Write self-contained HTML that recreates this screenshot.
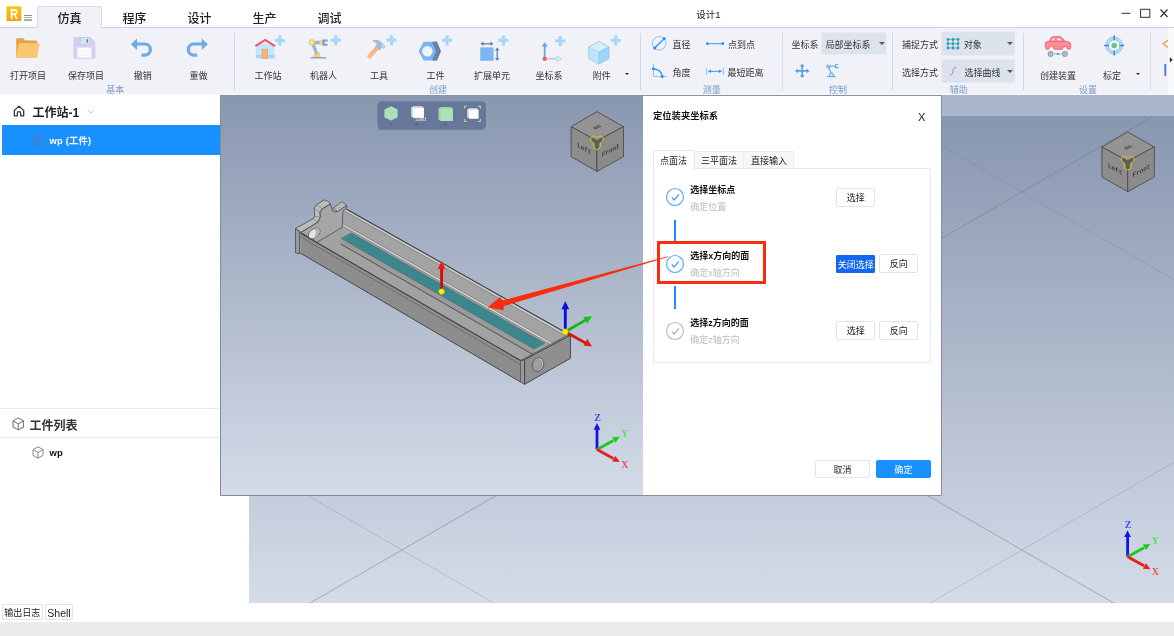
<!DOCTYPE html>
<html lang="zh-CN">
<head>
<meta charset="utf-8">
<title>设计1</title>
<style>
*{box-sizing:border-box;margin:0;padding:0}
html,body{width:1174px;height:636px;overflow:hidden;background:#fff}
body{position:relative;font-family:"Liberation Sans","Noto Sans CJK SC",sans-serif;color:#333;font-size:9px}
.abs{position:absolute}
.t{position:absolute;white-space:nowrap;line-height:1;transform:translate(-50%,-50%)}
.tl{position:absolute;white-space:nowrap;line-height:1;transform:translate(0,-50%)}
#titlebar{left:0;top:0;width:1174px;height:27px;background:#fff;z-index:3}
#ribbon{left:0;top:27px;width:1174px;height:68px;background:#f0f2f7;border-top:1px solid #c9d5e9}
.tab{position:absolute;top:6px;height:22px;width:65px;font-size:12px;font-weight:500;color:#222;text-align:center;line-height:26px}
.tab.on{background:#f0f2f7;border:1px solid #d3dced;border-bottom:none;border-radius:3px 3px 0 0;line-height:24px}
.lbl{font-size:9px;color:#333}
.grp{font-size:9px;color:#7b9bc8}
.sep{position:absolute;top:33px;height:57px;width:1px;background:#d0daeb}
.combo{position:absolute;background:#dde3ed}
.caret{position:absolute;width:0;height:0;border-left:3px solid transparent;border-right:3px solid transparent;border-top:3.5px solid #555}
#left{left:0;top:95px;width:220px;height:508px;background:#fff}
.btn{position:absolute;border:1px solid #e3e3e3;border-radius:2px;background:#fff;font-size:9px;color:#222;text-align:center}
</style>
</head>
<body>
<div id="app" class="abs" style="left:0;top:0;width:1174px;height:636px;will-change:transform;background:#fff">
<!-- TITLE BAR -->
<div id="titlebar" class="abs">
  <svg class="abs" style="left:6px;top:6px" width="16" height="16" viewBox="0 0 16 16">
    <defs><linearGradient id="lg" x1="0" y1="0" x2="0" y2="1"><stop offset="0" stop-color="#fbc715"/><stop offset="1" stop-color="#eea410"/></linearGradient></defs>
    <rect x="0.5" y="0.3" width="14.8" height="14.8" fill="url(#lg)"/>
    <text transform="translate(7.900 13.300) scale(0.740 1)" font-family="Liberation Sans,sans-serif" font-weight="bold" font-size="15" fill="#fff" text-anchor="middle">R</text>
  </svg>
  <div class="abs" style="left:24px;top:14.700px;width:8.200px;height:1.500px;background:#8c8c8c"></div>
  <div class="abs" style="left:24px;top:16.900px;width:8.200px;height:1.500px;background:#b0b0b0"></div>
  <div class="abs" style="left:24px;top:19.200px;width:8.200px;height:1.500px;background:#adadad"></div>
  <div class="tab on" style="left:37px">仿真</div>
  <div class="tab" style="left:102px">程序</div>
  <div class="tab" style="left:167px">设计</div>
  <div class="tab" style="left:232px">生产</div>
  <div class="tab" style="left:297px">调试</div>
  <div class="t" style="left:708.5px;top:14.5px;font-size:9.5px;color:#222">设计1</div>
  <svg class="abs" style="left:1118px;top:6px" width="54" height="16" viewBox="0 0 54 16" fill="none" stroke="#333" stroke-width="1">
    <path d="M3.4 7.3h9"/>
    <rect x="22.6" y="3.3" width="9.2" height="8"/>
    <path d="M42.500 3.500l7 7.500M49.500 3.500l-7 7.500" stroke-width="1.200"/>
  </svg>
</div>
<!-- RIBBON -->
<div id="ribbon" class="abs"></div>
<div class="abs" style="left:0;top:93px;width:1174px;height:2px;background:#f6f7fa"></div>
<div id="rib" class="abs" style="left:0;top:0;width:1174px;height:95px">

<!-- group 基本 -->
<svg class="abs" style="left:0;top:28px" width="1174" height="67" viewBox="0 28 1174 67">
<rect x="821.5" y="32.5" width="64.7" height="22" fill="#dde3ed"/>
<rect x="941.3" y="31.8" width="73.6" height="23.7" fill="#dde3ed"/>
<rect x="941.3" y="59.3" width="73.6" height="23.4" fill="#dde3ed"/>
<!-- folder -->
<path d="M16.3 39.2q0-1 1-1h6.2l1.6 2.2h11q1 0 1 1v3h-20.8z" fill="#e0a146"/>
<path d="M16.3 57.6V39.5h5.8l1.8 2.3h12.5q0.8 0 0.8 0.8V57.6z" fill="#e3a54b"/>
<path d="M18.6 44.2q0.2-0.9 1.1-0.9h19q1.1 0 0.9 1l-2.3 12.3q-0.2 1-1.2 1H17.3q-1.1 0-0.9-1z" fill="#fdc673"/>
<!-- save -->
<path d="M74.6 37.6h15.6l4.6 4.6v15.4q0 0.6-0.6 0.6H74.6q-0.6 0-0.6-0.6V38.2q0-0.6 0.6-0.6z" fill="#dacdf1" stroke="#cdbdea" stroke-width="0.600"/>
<rect x="80.4" y="37.8" width="9.4" height="6.4" fill="#d9e6f2" stroke="#b9c9dc" stroke-width="0.5"/>
<rect x="86.6" y="39.2" width="1.5" height="3.4" fill="#5c7fb4"/>
<rect x="77.4" y="47.6" width="14" height="10" fill="#fff"/>
<path d="M78.6 50.4h11.6M78.6 52.8h11.6M78.6 55.2h11.6" stroke="#dcebfa" stroke-width="0.8"/>
<!-- undo -->
<path d="M130.8 44.3l6.2-5.8v3.9h7.8a7.2 7.2 0 0 1 0 14.4h-3.3v-3.2h3.3a4 4 0 0 0 0-8h-7.8v4.4z" fill="#6daaea"/>
<!-- redo -->
<path d="M207.9 44.3l-6.2-5.8v3.9h-7.8a7.2 7.2 0 0 0 0 14.4h3.3v-3.2h-3.3a4 4 0 0 1 0-8h7.8v4.4z" fill="#6daaea"/>
<!-- house -->
<rect x="255.8" y="44" width="18.8" height="14.4" fill="#c4e6fb"/>
<rect x="255.8" y="54.8" width="18.8" height="3.6" fill="#aad8f6"/>
<path d="M255.400 46.200L265.200 40l9.800 6.200" fill="none" stroke="#ee5562" stroke-width="2" stroke-linejoin="miter"/>
<rect x="262" y="49.2" width="5.6" height="9.2" fill="#fbb27a" stroke="#e8905a" stroke-width="0.6"/>
<path d="M278.29999999999995 35.5h3.2v3.4h3.4v3.2h-3.4v3.4h-3.2v-3.4h-3.4v-3.2h3.4z" fill="#a6d8f6"/>
<!-- robot -->
<path d="M310.5 57h15.8v1.6h-15.8z" fill="#8fabce"/>
<path d="M313.6 56.8l1.6-4.6h3.6l1.6 4.6z" fill="#f5d96b" stroke="#d9b840" stroke-width="0.4"/>
<path d="M311 43.6l3.2-1 3.6 9.8-3 1z" fill="#9ab4d6"/>
<path d="M312 40.8h10.6v3.6H312z" fill="#9ab4d6"/>
<circle cx="311.8" cy="42.4" r="3" fill="#f5d96b" stroke="#d9b840" stroke-width="0.5"/><circle cx="311.8" cy="42.4" r="1.1" fill="#f0f2f7"/>
<rect x="319.6" y="40.2" width="2.6" height="4.8" fill="#f5d96b"/>
<path d="M322.4 39.4h5.2v2h-3v2.4h3v2h-5.2z" fill="#7e9cc4"/>
<circle cx="316.6" cy="54.2" r="0.9" fill="#8fabce"/>
<path d="M334.2 35.2h3.2v3.4h3.4v3.2h-3.4v3.4h-3.2v-3.4h-3.4v-3.2h3.4z" fill="#a6d8f6"/>
<!-- hammer -->
<path d="M366.8 56.2l9.6-10.8 3.2 2.9-9.6 10.8z" fill="#fbb583"/>
<path d="M372.6 40.4q4.2-1.6 7.4 0.6l5.6 5.2-2 2.2-1.6-0.6-2.4 2.8-4.6-4 2-2.6q-1.6-1.6-4.4-2.4z" fill="#a9bdd2"/>
<path d="M380.6 46.6l2.2-2.4 2.8 2.4-2 2.4z" fill="#c3d3e2"/>
<path d="M389.9 35.2h3.2v3.4h3.4v3.2h-3.4v3.4h-3.2v-3.4h-3.4v-3.2h3.4z" fill="#a6d8f6"/>
<!-- nut -->
<path d="M428 43.2l6-1.8h3l4 9.8-4 9.6h-3l-6-1.6z" fill="#6683a6"/>
<path d="M423.6 41.8h8l4.6 9.4-4.6 9.4h-8l-5-9.4z" fill="#7ab6f6"/>
<circle cx="427.4" cy="51.2" r="5.2" fill="#f0f2f7"/>
<path d="M445.4 35.4h3.2v3.4h3.4v3.2h-3.4v3.4h-3.2v-3.4h-3.4v-3.2h3.4z" fill="#a6d8f6"/>
<!-- expand unit -->
<rect x="480.2" y="47.4" width="13.4" height="13.4" fill="#7ab6f6"/>
<path d="M482.4 43.8h9.2" stroke="#5e7c9e" stroke-width="1.2"/><path d="M480.6 43.8l2.8-2.2v4.4zM493.4 43.8l-2.8-2.2v4.4z" fill="#5e7c9e"/>
<path d="M497.2 49.6v9" stroke="#5e7c9e" stroke-width="1.2"/><path d="M497.2 47.6l-2.2 2.8h4.4zM497.2 60.8l-2.2-2.8h4.4z" fill="#5e7c9e"/>
<path d="M501.9 35.4h3.2v3.4h3.4v3.2h-3.4v3.4h-3.2v-3.4h-3.4v-3.2h3.4z" fill="#a6d8f6"/>
<!-- coord -->
<path d="M546 58.7h11.5" stroke="#b9d2e2" stroke-width="1.8"/><path d="M561.2 58.7l-4.2-3v6z" fill="#f0f2f7" stroke="#b9d2e2" stroke-width="1"/>
<path d="M544.7 57V45.5" stroke="#6aa5ea" stroke-width="1.8"/><path d="M544.7 42.2l-3.2 4.2h6.4z" fill="#6aa5ea"/>
<circle cx="544.7" cy="58.7" r="2.2" fill="#f0606e"/>
<path d="M558.6 35.9h3.2v3.4h3.4v3.2h-3.4v3.4h-3.2v-3.4h-3.4v-3.2h3.4z" fill="#a6d8f6"/>
<!-- cube -->
<path d="M598.8 41.6l10 5.4v11.6l-10 5.4-10-5.4V47z" fill="#bfe6fb" stroke="#86bdf0" stroke-width="0.7" stroke-linejoin="round"/>
<path d="M598.8 41.6l10 5.4-10 5.2-10-5.2z" fill="#d6effc" stroke="#86bdf0" stroke-width="0.5" stroke-linejoin="round"/>
<path d="M598.8 52.2l10-5.2v11.6l-10 5.4z" fill="#9bd8f8" stroke="#86bdf0" stroke-width="0.5" stroke-linejoin="round"/>
<path d="M614.1999999999999 35.5h3.2v3.4h3.4v3.2h-3.4v3.4h-3.2v-3.4h-3.4v-3.2h3.4z" fill="#a6d8f6"/>
<!-- diameter -->
<circle cx="659.2" cy="43.3" r="6.8" fill="none" stroke="#7ab4ee" stroke-width="0.8"/>
<path d="M654.7 48l9.5-9.4" stroke="#1e8fff" stroke-width="1.3"/><circle cx="654.7" cy="48" r="1.5" fill="#1e8fff"/><circle cx="664.2" cy="38.6" r="1.5" fill="#1e8fff"/>
<!-- angle -->
<path d="M653.4 64v12.4h14" fill="none" stroke="#7ab4ee" stroke-width="0.8"/>
<path d="M653.4 68.8q8 0.4 8.8 7.6" fill="none" stroke="#1e8fff" stroke-width="1.3"/><circle cx="653.4" cy="68.8" r="1.5" fill="#1e8fff"/><circle cx="662.2" cy="76.4" r="1.5" fill="#1e8fff"/>
<!-- p2p -->
<path d="M707.4 43.7h15.4" stroke="#1e8fff" stroke-width="0.9"/><circle cx="707.4" cy="43.7" r="1.4" fill="#1e8fff"/><circle cx="722.8" cy="43.7" r="1.4" fill="#1e8fff"/>
<!-- min dist -->
<path d="M706.6 67.8v7M723.4 67.8v7" stroke="#7ab4ee" stroke-width="0.8"/><path d="M710 71.3h10" stroke="#1e8fff" stroke-width="0.9"/><path d="M708 71.3l3-1.8v3.6zM722 71.3l-3-1.8v3.6z" fill="#1e8fff"/>
<!-- move icon -->
<g fill="none" stroke="#5e9be0" stroke-width="1.600"><path d="M797 70.900h10.400M802.200 65.700v10.400"/></g>
<path d="M795 70.9l2.8-2.4v4.8zM809.4 70.9l-2.8-2.4v4.8zM802.2 63.7l-2.4 2.8h4.8zM802.2 78.1l-2.4-2.8h4.8z" fill="#5e9be0"/>
<!-- robot small -->
<g fill="none" stroke="#58a8e8" stroke-width="1.1"><path d="M827.2 76.6h8.4"/><path d="M829.4 76.2l1-3h2.2l1 3"/><path d="M828.6 67.4l2.6 5.6"/><path d="M829 66.2h6"/><circle cx="828.2" cy="66.4" r="1.4"/><path d="M835 64.8h3.4M835 67.6h3.4M835.4 64.8v2.8"/></g>
<!-- grid icon -->
<path d="M948 39.4H958M948 43.7H958M948 48H958M948 39.4V48M953 39.4V48M958 39.4V48" stroke="#2f86dd" stroke-width="0.600" fill="none"/>
<g fill="#19a79b"><circle cx="948" cy="39.4" r="1.400"/><circle cx="953" cy="39.4" r="1.400"/><circle cx="958" cy="39.4" r="1.400"/><circle cx="948" cy="43.7" r="1.400"/><circle cx="953" cy="43.7" r="1.400"/><circle cx="958" cy="43.7" r="1.400"/><circle cx="948" cy="48" r="1.400"/><circle cx="953" cy="48" r="1.400"/><circle cx="958" cy="48" r="1.400"/></g>
<!-- S curve -->
<path d="M949.6 74.8q3.4 0.6 3.4-3.6t3.4-3.8" fill="none" stroke="#c77be2" stroke-width="1"/>
<!-- car -->
<path d="M1045.400 43.200q0-1.300 1.400-1.500l2.400-0.400 2-3.800q0.500-0.800 1.600-0.800h7.200q1 0 1.700 0.800l3 3.600 4.400 1q1.600 0.400 1.600 1.800v3.600q0 1.600-1.600 1.700h-1.400a2.700 2.700 0 0 0-5.400 0h-8.200a2.700 2.700 0 0 0-5.400 0h-1.600q-1.700-0.100-1.700-1.700z" fill="#ff8c92" stroke="#ea5662" stroke-width="0.800" stroke-linejoin="round"/>
<path d="M1051.100 40.800l1.500-2.700h2.300v2.700zM1056.500 38.100h3.300l2.400 2.700h-5.700z" fill="#f2f3f8" stroke="#ea5662" stroke-width="0.500"/>
<path d="M1049 41.500h15.600" stroke="#ea5662" stroke-width="0.600"/>
<g fill="#c9d3e2" stroke="#8a9dba" stroke-width="1.100"><circle cx="1050.600" cy="53.900" r="2.300"/><circle cx="1065" cy="53.900" r="2.300"/></g>
<circle cx="1050.600" cy="53.900" r="0.800" fill="#8a9dba"/><circle cx="1065" cy="53.900" r="0.800" fill="#8a9dba"/>
<path d="M1053.400 53.900h8.800" stroke="#a9b8cd" stroke-width="1"/><circle cx="1057.800" cy="53.900" r="1" fill="#5f7ca6"/>
<!-- target -->
<circle cx="1114.200" cy="45.500" r="7.100" fill="#f3f5f9" stroke="#b3ddf8" stroke-width="2.800"/>
<circle cx="1114.200" cy="45.500" r="5.700" fill="none" stroke="#62a3ea" stroke-width="0.500"/>
<circle cx="1114.200" cy="45.500" r="8.500" fill="none" stroke="#62a3ea" stroke-width="0.500"/>
<circle cx="1114.200" cy="45.500" r="2.700" fill="#6cc47c"/>
<path d="M1114.200 35.500v4.800M1114.200 50.700v4.800M1104.200 45.500h4.800M1119.400 45.500h4.800" stroke="#3f86d9" stroke-width="1.500"/>
<!-- right scroll strip -->
<path d="M1169 39.600l-6 4.200 6 4.200" fill="none" stroke="#e6a23c" stroke-width="1.300"/>
<rect x="1164.400" y="64" width="1.800" height="10.400" fill="#2b7de9"/><circle cx="1165.300" cy="75.200" r="1" fill="#e83c3c"/>
<rect x="1168" y="28" width="6" height="67" fill="#f9fafc"/>
<path d="M1169.800 57.200l2.800 2.600-2.800 2.600z" fill="#222"/>
</svg>
<div class="sep" style="left:234px"></div>
<div class="sep" style="left:640px"></div>
<div class="sep" style="left:782px"></div>
<div class="sep" style="left:892px"></div>
<div class="sep" style="left:1023px"></div>
<div class="sep" style="left:1150px"></div>
<div class="t lbl" style="left:28.1px;top:75.500px">打开项目</div>
<div class="t lbl" style="left:86px;top:75.500px">保存项目</div>
<div class="t lbl" style="left:142.800px;top:75.500px">撤销</div>
<div class="t lbl" style="left:198.600px;top:75.500px">重做</div>
<div class="t grp" style="left:115.200px;top:90.200px">基本</div>
<div class="t lbl" style="left:268px;top:75.500px">工作站</div>
<div class="t lbl" style="left:323.600px;top:75.500px">机器人</div>
<div class="t lbl" style="left:379.100px;top:75.500px">工具</div>
<div class="t lbl" style="left:435.400px;top:75.500px">工件</div>
<div class="t lbl" style="left:492px;top:75.500px">扩展单元</div>
<div class="t lbl" style="left:548.900px;top:75.500px">坐标系</div>
<div class="t lbl" style="left:601.700px;top:75.500px">附件</div>
<div class="caret" style="left:625px;top:73.400px;border-left-width:2.100px;border-right-width:2.100px;border-top-width:2.400px;border-top-color:#222"></div>
<div class="t grp" style="left:438.100px;top:90.200px">创建</div>
<div class="tl lbl" style="left:672.600px;top:44.500px">直径</div>
<div class="tl lbl" style="left:672.600px;top:73.200px">角度</div>
<div class="tl lbl" style="left:727.900px;top:44.500px">点到点</div>
<div class="tl lbl" style="left:727.600px;top:72.500px">最短距离</div>
<div class="t grp" style="left:711.800px;top:90.200px">测量</div>
<div class="tl lbl" style="left:791.600px;top:45.200px">坐标系</div>
<div class="tl lbl" style="left:825.400px;top:45.200px">局部坐标系</div>
<div class="caret" style="left:878.800px;top:41.800px"></div>
<div class="t grp" style="left:837.900px;top:90.200px">控制</div>
<div class="tl lbl" style="left:902.100px;top:45.200px">捕捉方式</div>
<div class="tl lbl" style="left:902.100px;top:73px">选择方式</div>
<div class="tl lbl" style="left:963.800px;top:45.200px">对象</div>
<div class="tl lbl" style="left:964.500px;top:73px">选择曲线</div>
<div class="caret" style="left:1007.400px;top:42.400px"></div>
<div class="caret" style="left:1007.400px;top:69.800px"></div>
<div class="t grp" style="left:958.700px;top:90.200px">辅助</div>
<div class="t lbl" style="left:1058px;top:75.500px">创建装置</div>
<div class="t lbl" style="left:1111.900px;top:75.500px">标定</div>
<div class="caret" style="left:1135.500px;top:73.400px;border-left-width:2.100px;border-right-width:2.100px;border-top-width:2.400px;border-top-color:#222"></div>
<div class="t grp" style="left:1087.900px;top:90.200px">设置</div>

</div>
<!-- LEFT PANEL -->
<div id="left" class="abs">

<svg class="abs" style="left:12.500px;top:9.600px" width="12" height="12" viewBox="0 0 12 12" fill="none" stroke="#333" stroke-width="1.250" stroke-linejoin="round"><path d="M1.300 5.400L6 1.200l4.700 4.200v5.400h-3V8.200a1.700 1.700 0 0 0-3.400 0v2.600h-3z"/></svg>
<div class="tl" style="left:32.600px;top:18px;font-size:12px;font-weight:bold;color:#222">工作站-1</div>
<svg class="abs" style="left:86.500px;top:13.500px" width="8" height="6" viewBox="0 0 8 6" fill="none" stroke="#c4c4c4" stroke-width="1"><path d="M1 1.200l3 3 3-3"/></svg>
<div class="abs" style="left:2px;top:30.200px;width:218px;height:29.500px;background:#1890ff"></div>
<svg class="abs" style="left:32.4px;top:38.8px" width="12" height="13" viewBox="0 0 12 13" fill="none" stroke="#4f7db8" stroke-width="1.200" stroke-linejoin="round"><path d="M6 0.8l5 2.8v5.800l-5 2.800-5-2.800V3.600z"/><path d="M1.200 3.700L6 6.500l4.800-2.800M6 6.500v5.600"/></svg>
<div class="tl" style="left:49.600px;top:46.900px;font-size:9.300px;letter-spacing:0.200px;font-weight:bold;color:#fff">wp (工件)</div>
<div class="abs" style="left:0;top:312.800px;width:220px;height:1px;background:#ececec"></div>
<svg class="abs" style="left:11.6px;top:321.8px" width="12.6" height="13.8" viewBox="0 0 12 13" fill="none" stroke="#777" stroke-width="1" stroke-linejoin="round"><path d="M6 0.8l5 2.8v5.800l-5 2.800-5-2.800V3.600z"/><path d="M1.200 3.700L6 6.500l4.800-2.800M6 6.500v5.600"/></svg>
<div class="tl" style="left:29.600px;top:330.500px;font-size:12px;font-weight:bold;color:#333">工件列表</div>
<div class="abs" style="left:0;top:342px;width:220px;height:1px;background:#ececec"></div>
<svg class="abs" style="left:32.4px;top:351px" width="12" height="13" viewBox="0 0 12 13" fill="none" stroke="#888" stroke-width="1" stroke-linejoin="round"><path d="M6 0.8l5 2.8v5.800l-5 2.800-5-2.800V3.600z"/><path d="M1.200 3.700L6 6.500l4.800-2.800M6 6.500v5.600"/></svg>
<div class="tl" style="left:49.600px;top:358.200px;font-size:9px;font-weight:bold;font-size:9.500px;color:#111">wp</div>

</div>
<!-- BACK VIEWPORT -->
<svg class="abs" style="left:249px;top:95px" width="925" height="508" viewBox="249 95 925 508">
<defs><linearGradient id="bg1" x1="0" y1="0" x2="0" y2="1"><stop offset="0" stop-color="#8896af"/><stop offset="1" stop-color="#d4dce8"/></linearGradient>
<clipPath id="cpb"><rect x="249" y="116" width="925" height="487"/></clipPath></defs>
<rect x="249" y="95" width="925" height="21" fill="#aab6cc"/>
<rect x="249" y="116" width="925" height="487" fill="url(#bg1)"/>
<g clip-path="url(#cpb)" stroke="#6f7c8c" stroke-opacity="0.3" stroke-width="0.9" fill="none">
<path d="M249 461.7L1174 995.8"/>
<path d="M249 638.3L1174 104.2"/>
<path d="M249 103.7L1174 637.8"/>
<path d="M249 996.3L1174 462.2"/>
<path d="M249 -254.3L1174 279.8"/>
<path d="M249 638.3L1174 104.2"/>
<path d="M249 103.7L1174 637.8"/>
<path d="M249 280.3L1174 -253.8"/>
</g>
<g transform="translate(530.8 20.3)">
<g stroke="#444" stroke-width="0.800" stroke-linejoin="round">
<path d="M596.900 111.600l26.600 15.100-26.600 14.200-25.800-14.200z" fill="#939393"/>
<path d="M571.100 126.700l25.800 14.200v30.500l-25.800-14.800z" fill="#8d8d8d"/>
<path d="M596.900 140.900l26.600-14.200v29.900l-26.600 14.800z" fill="#8b8b8b"/>
</g>
<path d="M596.900 140.600l-5.600-3.200 0.100 3.800 3.600 2.200 0 5.200 3.800 0 0-5.200 3.600-2.200 0.100-3.800z" fill="#5e5e5e"/>
<path d="M596.900 137.400q2.400-2.200 4.800-1.200 2.400 1.600 1.400 4.400l-2.600 2.200v3.600q-0.400 2.800-3.600 3.200-3.200-0.400-3.600-3.200v-3.600l-2.600-2.200q-1-2.800 1.400-4.400 2.400-1 4.800 1.200z" fill="none" stroke="#cfc61a" stroke-width="1"/>
<g font-family="Liberation Mono,monospace" font-size="6.800" font-weight="bold" fill="#3c3c3c">
<text transform="matrix(0.87,0.48,0,1,577.200,147)">Left</text>
<text transform="matrix(0.87,-0.47,0,1,601.800,157.200)">Front</text>
<text transform="matrix(-0.87,0.47,-0.87,-0.47,598.600,124.800)" font-size="5.800">Up</text>
</g>
</g>
<g transform="translate(530.6 107.2)">
<path d="M597 449.500V429" stroke="#1414e6" stroke-width="2.800"/><path d="M597 423l-3.300 6.800h6.600z" fill="#1414e6"/>
<path d="M597 449.500l16.400-9" stroke="#1ec81e" stroke-width="2.800"/><path d="M619.800 436.800l-7.600 0.400 3.200 5.600z" fill="#1ec81e"/>
<path d="M597 449.500l16.400 9" stroke="#e61e1e" stroke-width="2.800"/><path d="M619.800 462l-7.600-0.400 3.200-5.600z" fill="#e61e1e"/>
<g font-family="Liberation Serif,serif" font-size="10" font-weight="bold" text-anchor="middle">
<text x="597.500" y="421" fill="#4646f0">Z</text><text x="624.800" y="436.600" fill="#50e650">Y</text><text x="624.800" y="468.200" fill="#f25050">X</text>
</g>
</g>
</svg>
<!-- OVERLAY -->
<div id="ov" class="abs" style="left:0;top:0;width:1174px;height:636px">
<svg class="abs" style="left:220px;top:95px" width="722" height="401" viewBox="220 95 722 401">
<defs>
<linearGradient id="bg2" x1="0" y1="0" x2="0" y2="1"><stop offset="0" stop-color="#8896af"/><stop offset="1" stop-color="#d4dce8"/></linearGradient>
</defs>
<rect x="220" y="95" width="424" height="401" fill="url(#bg2)"/>
<rect x="643" y="95" width="299" height="401" fill="#fff"/>
<!-- toolbar -->
<rect x="377.400" y="101.300" width="108.600" height="28.500" rx="4.500" fill="#66779a"/>
<g id="tbicons">
<path d="M391 106.200l6.600 3.400v7.600l-6.600 3.400-6.600-3.400v-7.600z" fill="#abe2b8"/>
<path d="M391 113.200v7.400M384.600 109.800l6.400 3.400 6.400-3.400" stroke="#9ad3a8" stroke-width="0.500" fill="none"/>
<path d="M389 123.600h4l-2 1.800z" fill="#4f5f7e"/><path d="M415.200 123.600h4l-2 1.800z" fill="#4f5f7e"/><path d="M443.400 123.600h4l-2 1.800z" fill="#4f5f7e"/>
<path d="M411.200 107.400l2-1.200h9l1.800 1.800v9.800h-10.800l-2-1.600z" fill="#dcdcdc"/>
<rect x="413.200" y="108" width="10.600" height="9.800" fill="#fff"/>
<text x="415.300" y="120.800" font-family="Liberation Sans,sans-serif" font-size="4.800" fill="#e8ecf2">Solid</text>
<path d="M438.400 108.600l2.400-1.600h10.400l1.600 1.800v12.200h-12.200l-2.200-1.800z" fill="#9ed3ab"/>
<rect x="440.600" y="108.800" width="12.200" height="12.200" fill="#abe2b8"/>
<path d="M467.200 109.600l2-1.400h7.600l1.600 1.600v8.800h-9.400l-1.800-1.400z" fill="#dcdcdc"/>
<rect x="469" y="109.800" width="9.400" height="8.800" fill="#fff"/>
<g fill="none" stroke="#abe2b8" stroke-width="1"><path d="M464.400 108.600v-2.400h2.600M477.800 106.200h2.600v2.400M464.400 119v2.400h2.600M477.800 121.400h2.600V119"/></g>
</g>
<!-- view cube -->
<g transform="translate(0 0)">
<g stroke="#444" stroke-width="0.800" stroke-linejoin="round">
<path d="M596.900 111.600l26.600 15.100-26.600 14.200-25.800-14.200z" fill="#939393"/>
<path d="M571.100 126.700l25.800 14.200v30.500l-25.800-14.800z" fill="#8d8d8d"/>
<path d="M596.900 140.900l26.600-14.200v29.900l-26.600 14.800z" fill="#8b8b8b"/>
</g>
<path d="M596.900 140.600l-5.600-3.200 0.100 3.800 3.600 2.200 0 5.200 3.800 0 0-5.200 3.600-2.200 0.100-3.800z" fill="#5e5e5e"/>
<path d="M596.900 137.400q2.400-2.200 4.800-1.200 2.400 1.600 1.400 4.400l-2.600 2.200v3.600q-0.400 2.800-3.600 3.200-3.200-0.400-3.600-3.200v-3.600l-2.600-2.200q-1-2.800 1.400-4.400 2.400-1 4.800 1.200z" fill="none" stroke="#cfc61a" stroke-width="1"/>
<g font-family="Liberation Mono,monospace" font-size="6.800" font-weight="bold" fill="#3c3c3c">
<text transform="matrix(0.87,0.48,0,1,577.200,147)">Left</text>
<text transform="matrix(0.87,-0.47,0,1,601.800,157.200)">Front</text>
<text transform="matrix(-0.87,0.47,-0.87,-0.47,598.600,124.800)" font-size="5.800">Up</text>
</g>
</g>
<!-- MODEL -->
<g id="model" stroke-linejoin="round">
<!-- left plate -->
<!--MODELGEN-->
<path d="M346.6 209.2L570.0 335.1L566.5 336.2L344.5 210.9z" fill="#c9c9c9" />
<path d="M344.5 210.9L566.3 336.1L552.9 343.4L342.6 223.8z" fill="#a3a3a3" />
<path d="M342.6 223.8L552.9 343.4L551.1 344.4L344.0 226.6z" fill="#d6d6d6" />
<path d="M344.0 226.6L551.1 344.4L548.8 345.7L342.0 227.8z" fill="#a0a0a0" />
<path d="M342.0 227.8L548.8 345.7L520.9 360.8L317.3 242.9z" fill="#a2a2a2" />
<path d="M350.8 232.8L545.2 343.6L534.5 349.3L340.9 238.3z" fill="#3a878d" />
<path d="M340.9 238.3L534.5 349.3L534.5 355.4L340.9 244.1z" fill="#9b9b9b" />
<path d="M346.6 209.2L570.4 335.3" stroke="#3c3c3c" stroke-width="1.1" fill="none"/>
<path d="M344.5 211.1L566.5 336.4" stroke="#6a6a6a" stroke-width="0.5" fill="none"/>
<path d="M342.6 223.6L553.1 343.3" stroke="#666" stroke-width="0.5" fill="none"/>
<path d="M343.8 226.7L550.8 344.6" stroke="#6e6e6e" stroke-width="0.5" fill="none"/>
<path d="M350.8 232.8L545.2 343.6" stroke="#4a5a5c" stroke-width="0.5" fill="none"/>
<path d="M340.9 238.3L534.5 349.3" stroke="#4a5a5c" stroke-width="0.5" fill="none"/>
<path d="M340.9 244.1L534.5 355.4" stroke="#3c3c3c" stroke-width="0.8" fill="none"/>
<path d="M300.4 233.1L520.6 360.6L520.6 382.0L300.4 253.1z" fill="#8d8d8d" />
<path d="M300.4 233.1L520.6 360.6" stroke="#3c3c3c" stroke-width="1.1" fill="none"/>
<path d="M300.4 236.9L520.6 364.7" stroke="#5a5a5a" stroke-width="0.6" fill="none"/>
<path d="M300.4 253.1L520.6 382.0" stroke="#3c3c3c" stroke-width="0.9" fill="none"/>
<!--/MODELGEN-->
<!--PLATE-->
<path d="M295.5 228.5 L299.5 231.6 L299.5 253.8 L295.5 252.7z" fill="#9b9b9b" stroke="#3c3c3c" stroke-width="0.700"/>
<path d="M295.5 228.5 L313.1 218.6 L314.7 216.4 L314.2 208.7 L316.4 204.9 L324.1 199.9 L327.4 201.0 L330.7 203.8 L330.3 204.0 L322.4 208.9 L320.0 212.0 L320.4 217.0 L318.0 222.1 L301.0 232.4z" fill="#bcbcbc" stroke="#3c3c3c" stroke-width="0.700"/>
<path d="M301.0 232.4 L318.0 222.1 L320.4 217.0 L320.0 212.0 L322.4 208.9 L330.3 204.0 L332.3 210.9 L335.1 212.0 L337.6 211.2 L346.6 205.6 L346.6 208.2 L343.0 210.9 L342.2 227.4 L316.9 242.3z" fill="#a6a6a6" stroke="#3c3c3c" stroke-width="0.700"/>
<path d="M332.9 208.2 L341.7 201.6 L346.6 205.4 L337.6 211.5z" fill="#b6b6b6" stroke="#3c3c3c" stroke-width="0.600"/>
<path d="M313.1 218.6 L318.0 222.1M314.7 216.4L320.4 217.0M314.2 208.7L320.0 212.0M316.4 204.9L322.4 208.9" stroke="#6a6a6a" stroke-width="0.500" fill="none"/>
<ellipse cx="314.2" cy="233.5" rx="6.600" ry="4.400" transform="rotate(-38 314.2 233.5)" fill="#dfe4ea" stroke="#3c3c3c" stroke-width="0.600"/>
<path d="M313.8 228.5 L318.0 228.0 L320.0 231.3 L318.0 236.2 L313.8 239.7 L316.0 234.0 L316.4 230.7z" fill="#b4b4b4" stroke="#777" stroke-width="0.300"/>
<!--/PLATE-->
<!-- right end plate -->
<path d="M520.600 360.600L524.600 359.200L524.600 384.300L520.600 382z" fill="#9a9a9a" stroke="#3c3c3c" stroke-width="0.700"/>
<path d="M520.600 360.600L566.200 335.800L570.400 335.300L524.600 359.800z" fill="#9c9c9c" stroke="#3c3c3c" stroke-width="0.600"/>
<path d="M524.600 359.600L570.400 335.300L570.400 358.300L524.600 384.300z" fill="#8f8f8f" stroke="#3c3c3c" stroke-width="0.900"/>
<ellipse cx="538" cy="364.600" rx="5.600" ry="7.200" transform="rotate(22 538 364.600)" fill="#b8b8b8" stroke="#3c3c3c" stroke-width="0.600"/>
<ellipse cx="537.300" cy="365.100" rx="4" ry="5.600" transform="rotate(22 537.300 365.100)" fill="#9f9f9f" stroke="#777" stroke-width="0.400"/>
</g>
<!-- red arrow on model -->
<path d="M441.600 291L441.600 268" stroke="#cf0c0c" stroke-width="2.800"/><path d="M441.600 261l-3.800 8h7.600z" fill="#f51414"/>
<circle cx="441.600" cy="291.600" r="2.900" fill="#f6f000" stroke="#b8b000" stroke-width="0.500"/>
<!-- frame at model corner -->
<path d="M565.300 331.700V308" stroke="#0a0ae0" stroke-width="2.800"/><path d="M565.300 301.200l-3.900 8h7.800z" fill="#0a0ae0"/>
<path d="M565.300 331.700l20.500-11.800" stroke="#16b416" stroke-width="2.800"/><path d="M592 316.200l-8.600 0.800 3.900 6.600z" fill="#18c018"/>
<path d="M565.300 331.700l20.500 11.400" stroke="#d41414" stroke-width="2.800"/><path d="M592 346.400l-8.600-0.800 3.900-6.600z" fill="#e81818"/>
<circle cx="565.300" cy="331.700" r="2.900" fill="#f6f000" stroke="#b8b000" stroke-width="0.500"/>
<!-- world axes -->
<g transform="translate(0 0)">
<path d="M597 449.500V429" stroke="#1414e6" stroke-width="2.800"/><path d="M597 423l-3.300 6.800h6.600z" fill="#1414e6"/>
<path d="M597 449.500l16.400-9" stroke="#1ec81e" stroke-width="2.800"/><path d="M619.800 436.800l-7.600 0.400 3.200 5.600z" fill="#1ec81e"/>
<path d="M597 449.500l16.400 9" stroke="#e61e1e" stroke-width="2.800"/><path d="M619.800 462l-7.600-0.400 3.200-5.600z" fill="#e61e1e"/>
<g font-family="Liberation Serif,serif" font-size="10" font-weight="bold" text-anchor="middle">
<text x="597.500" y="421" fill="#4646f0">Z</text><text x="624.800" y="436.600" fill="#50e650">Y</text><text x="624.800" y="468.200" fill="#f25050">X</text>
</g>
</g>
<!-- borders -->
<path d="M220.500 95v400.500H941.500V95" fill="none" stroke="#878b93" stroke-width="1"/>
<path d="M220 95.500H942" fill="none" stroke="#8a93a3" stroke-width="1"/>
</svg>


<div class="tl" style="left:653px;top:116.700px;font-size:9.300px;font-weight:bold;color:#111">定位装夹坐标系</div>
<div class="t" style="left:921.600px;top:116.900px;font-size:11px;color:#222">X</div>
<!-- tabs -->
<div class="abs" style="left:694.500px;top:151px;width:49px;height:17.500px;background:#f7f7f7;border:1px solid #ececec;border-left:none"></div>
<div class="abs" style="left:743.500px;top:151px;width:50px;height:17.500px;background:#f7f7f7;border:1px solid #ececec;border-left:none"></div>
<div class="abs" style="left:652.500px;top:168px;width:278px;height:195px;border:1px solid #e9e9e9;background:#fff"></div>
<div class="abs" style="left:652.500px;top:150px;width:42.500px;height:19px;background:#fff;border:1px solid #e6e6e6;border-bottom:none"></div>
<div class="t" style="left:673.400px;top:160.500px;font-size:9px;color:#222">点面法</div>
<div class="t" style="left:718.900px;top:160.800px;font-size:9px;color:#222">三平面法</div>
<div class="t" style="left:768.900px;top:160.800px;font-size:9px;color:#222">直接输入</div>
<!-- steps -->
<svg class="abs" style="left:664.900px;top:187.400px" width="20" height="20" viewBox="0 0 20 20" fill="none"><circle cx="10" cy="10" r="8.500" stroke="#5aabff" stroke-width="1.200"/><path d="M6.800 10.300l2.300 2.700 4.800-5.600" stroke="#3d98ff" stroke-width="1.200"/></svg>
<div class="tl" style="left:690.300px;top:189.800px;font-size:9px;font-weight:bold;color:#111">选择坐标点</div>
<div class="tl" style="left:690.300px;top:206.900px;font-size:9px;color:#bdbdbd">确定位置</div>
<div class="abs" style="left:673.900px;top:219.500px;width:2.400px;height:21px;background:#1a8cff"></div>
<svg class="abs" style="left:664.900px;top:254px" width="20" height="20" viewBox="0 0 20 20" fill="none"><circle cx="10" cy="10" r="8.500" stroke="#5aabff" stroke-width="1.200"/><path d="M6.800 10.300l2.300 2.700 4.800-5.600" stroke="#3d98ff" stroke-width="1.200"/></svg>
<div class="tl" style="left:690.300px;top:256.400px;font-size:9px;font-weight:bold;color:#111">选择x方向的面</div>
<div class="tl" style="left:690.300px;top:273.300px;font-size:9px;color:#bdbdbd">确定x轴方向</div>
<div class="abs" style="left:673.900px;top:285.500px;width:2.400px;height:23px;background:#1a8cff"></div>
<svg class="abs" style="left:664.900px;top:321px" width="20" height="20" viewBox="0 0 20 20" fill="none"><circle cx="10" cy="10" r="8.500" stroke="#bcbcbc" stroke-width="1.200"/><path d="M6.800 10.300l2.300 2.700 4.800-5.600" stroke="#b0b0b0" stroke-width="1.200"/></svg>
<div class="tl" style="left:690.300px;top:323.300px;font-size:9px;font-weight:bold;color:#111">选择z方向的面</div>
<div class="tl" style="left:690.300px;top:340.200px;font-size:9px;color:#bdbdbd">确定z轴方向</div>
<!-- buttons -->
<div class="btn" style="left:835.800px;top:187.800px;width:39.700px;height:19px;line-height:19.4px">选择</div>
<div class="btn" style="left:836.300px;top:254.500px;width:39px;height:18.400px;line-height:18.9px;background:#1467f3;border-color:#1467f3;color:#fff;border-radius:1px">关闭选择</div>
<div class="btn" style="left:878.800px;top:254.300px;width:39.700px;height:18.800px;line-height:19.4px">反向</div>
<div class="btn" style="left:835.800px;top:320.800px;width:39.700px;height:19px;line-height:19.4px">选择</div>
<div class="btn" style="left:878.800px;top:320.800px;width:39.700px;height:19px;line-height:19.4px">反向</div>
<div class="btn" style="left:815px;top:460px;width:54.800px;height:18.400px;border-color:#e6e6e6;line-height:18.9px">取消</div>
<div class="btn" style="left:876px;top:460px;width:55px;height:18.400px;line-height:18.9px;background:#1890ff;border-color:#1890ff;color:#fff">确定</div>
<!-- red highlight box -->

<div class="abs" style="left:657.200px;top:240.500px;width:109.200px;height:43.200px;border:3px solid #f92c0e"></div>
<svg class="abs" style="left:480px;top:250px;pointer-events:none" width="200" height="70" viewBox="480 250 200 70">
<path d="M487.700 307.300L500.100 297L502.300 300.500L668 256.300L668 256.900L503.800 306.100L503.500 310.400z" fill="#f92c0e"/>
</svg>


</div>
<!-- BOTTOM -->
<div class="btn" style="left:1.500px;top:604px;width:41.500px;height:16px;line-height:16px;border-color:#e2e2e2">输出日志</div>
<div class="btn" style="left:45px;top:604px;width:28px;height:16px;line-height:16px;font-size:10.500px;border-color:#e2e2e2">Shell</div>
<div class="abs" style="left:0;top:622px;width:1174px;height:14px;background:#ebebeb"></div>
</div>
</body>
</html>
